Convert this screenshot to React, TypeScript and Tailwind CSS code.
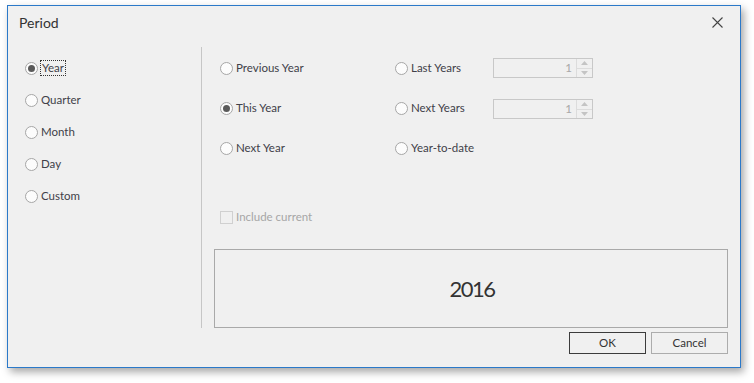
import React from "react";

const font = "font-['Segoe_UI',Lato,'Liberation_Sans',sans-serif]";

const Radio: React.FC<{ label: string; checked?: boolean; focused?: boolean }> = ({
  label,
  checked,
  focused,
}) => (
  <div className="flex items-center h-[20px]">
    <span className="w-[13px] h-[13px] rounded-full border border-[#a6a6a6] bg-[#fcfcfc] flex items-center justify-center shrink-0">
      {checked && <span className="w-[7px] h-[7px] rounded-full bg-[#5a5a5a]" />}
    </span>
    <span
      className={
        focused
          ? "ml-[2px] px-[1px] leading-[14px] border border-dotted border-[#333]"
          : "ml-[3px]"
      }
    >
      {label}
    </span>
  </div>
);

const SpinEdit: React.FC = () => (
  <div className="flex w-[100px] h-[20px] border border-[#c8c8c8] bg-[#f0f0f0]">
    <div className="flex-1 text-right pr-[4px] leading-[18px] text-[#a8a8a8]">1</div>
    <div className="w-[16px] flex flex-col border-l border-[#dcdcdc]">
      <div className="flex-1 flex items-center justify-center border-b border-[#dcdcdc]">
        <svg width="7" height="4" viewBox="0 0 7 4">
          <path d="M0 4 L3.5 0 L7 4 Z" fill="#c4c4c4" />
        </svg>
      </div>
      <div className="flex-1 flex items-center justify-center">
        <svg width="7" height="4" viewBox="0 0 7 4">
          <path d="M0 0 L3.5 4 L7 0 Z" fill="#c4c4c4" />
        </svg>
      </div>
    </div>
  </div>
);

export default function App() {
  return (
    <div className={`w-[754px] h-[383px] bg-white pl-[7px] pt-[5px] ${font}`}>
      <div className="w-[734px] h-[363px] border border-[#2b79c9] bg-[#f0f0f0] flex flex-col text-[11.5px] text-[#404048] shadow-[3px_4px_8px_rgba(0,0,0,0.35)]">
        <div className="h-[30px] flex items-center justify-between pl-[11px] pr-[17px] pt-[2px]">
          <span className="text-[14px] text-[#333]">Period</span>
          <svg width="11" height="11" viewBox="0 0 11 11">
            <path d="M0.5 0.5 L10.5 10.5 M10.5 0.5 L0.5 10.5" stroke="#444" strokeWidth="1.1" />
          </svg>
        </div>

        <div className="flex h-[281px] mt-[11px]">
          <div className="w-[193px] pl-[17px] pt-[11px] flex flex-col gap-[12px]">
            <Radio label="Year" checked focused />
            <Radio label="Quarter" />
            <Radio label="Month" />
            <Radio label="Day" />
            <Radio label="Custom" />
          </div>

          <div className="w-px bg-[#c6c6c6]" />

          <div className="flex-1 pl-[12px] pr-[12px] flex flex-col">
            <div className="flex pt-[11px] pl-[6px]">
              <div className="w-[175px] flex flex-col gap-[20px]">
                <Radio label="Previous Year" />
                <Radio label="This Year" checked />
                <Radio label="Next Year" />
              </div>
              <div className="w-[98px] flex flex-col gap-[20px]">
                <Radio label="Last Years" />
                <Radio label="Next Years" />
                <Radio label="Year-to-date" />
              </div>
              <div className="flex flex-col gap-[21px]">
                <SpinEdit />
                <SpinEdit />
              </div>
            </div>

            <div className="flex items-center mt-[51px] pl-[6px] h-[16px] text-[#a6a6a6]">
              <span className="w-[13px] h-[13px] border border-[#d0d0d0] bg-[#f0f0f0]" />
              <span className="ml-[3px]">Include current</span>
            </div>

            <div className="mt-auto h-[79px] border border-[#a9a9a9] flex items-center justify-center">
              <span className="text-[22px] tracking-[-1.5px] text-[#333] ml-[2px]">2016</span>
            </div>
          </div>
        </div>

        <div className="flex justify-end gap-[5px] pr-[12px] pt-[4px]">
          <button className="w-[77px] h-[22px] border border-[#3c3c3c] bg-[#f0f0f0] text-[#333]">OK</button>
          <button className="w-[77px] h-[22px] border border-[#acacac] bg-[#f0f0f0] text-[#333]">Cancel</button>
        </div>
      </div>
    </div>
  );
}
